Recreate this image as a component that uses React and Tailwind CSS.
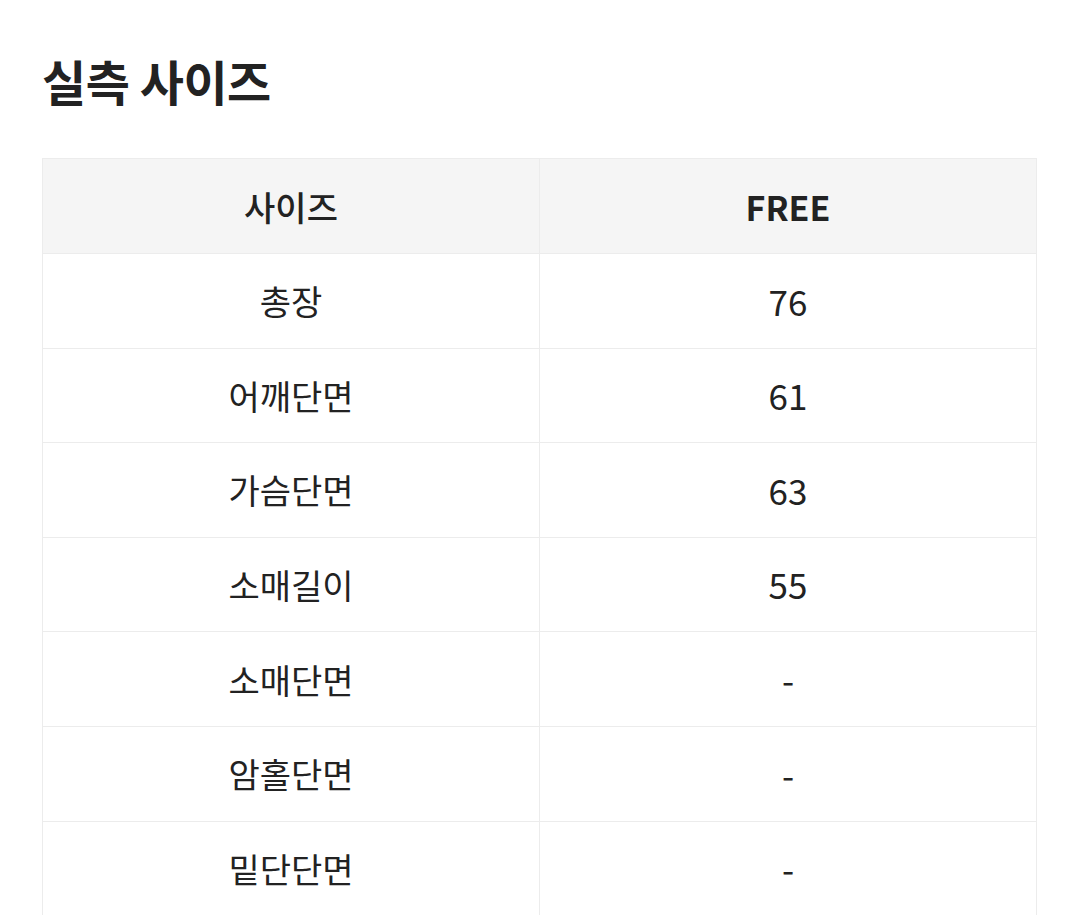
import React from 'react';

const rows = [
  ['총장', '76'],
  ['어깨단면', '61'],
  ['가슴단면', '63'],
  ['소매길이', '55'],
  ['소매단면', '-'],
  ['암홀단면', '-'],
  ['밑단단면', '-'],
];

const App = () => {
  return (
    <div
      className="w-[1080px] h-[915px] overflow-hidden bg-white text-[#222]"
      style={{ fontFamily: '"Noto Sans CJK KR", "Noto Sans", sans-serif' }}
    >
      <div className="pl-[42px] pr-[43px] pt-[46px]">
        <h1 className="text-[48px] font-bold leading-[68px] tracking-[-0.5px]">실측 사이즈</h1>
        <table className="mt-[44px] w-full border-collapse table-fixed">
          <thead>
            <tr className="bg-[#f5f5f5]">
              <th className="h-[95px] border border-[#ececec] text-[34px] font-medium">사이즈</th>
              <th className="h-[95px] border border-[#ececec] text-[34px] font-bold">FREE</th>
            </tr>
          </thead>
          <tbody>
            {rows.map(([label, value]) => (
              <tr key={label}>
                <td className="h-[94.6px] border border-[#ececec] text-center text-[34px]">{label}</td>
                <td className="h-[94.6px] border border-[#ececec] text-center text-[35px]">{value}</td>
              </tr>
            ))}
          </tbody>
        </table>
      </div>
    </div>
  );
};

export default App;
